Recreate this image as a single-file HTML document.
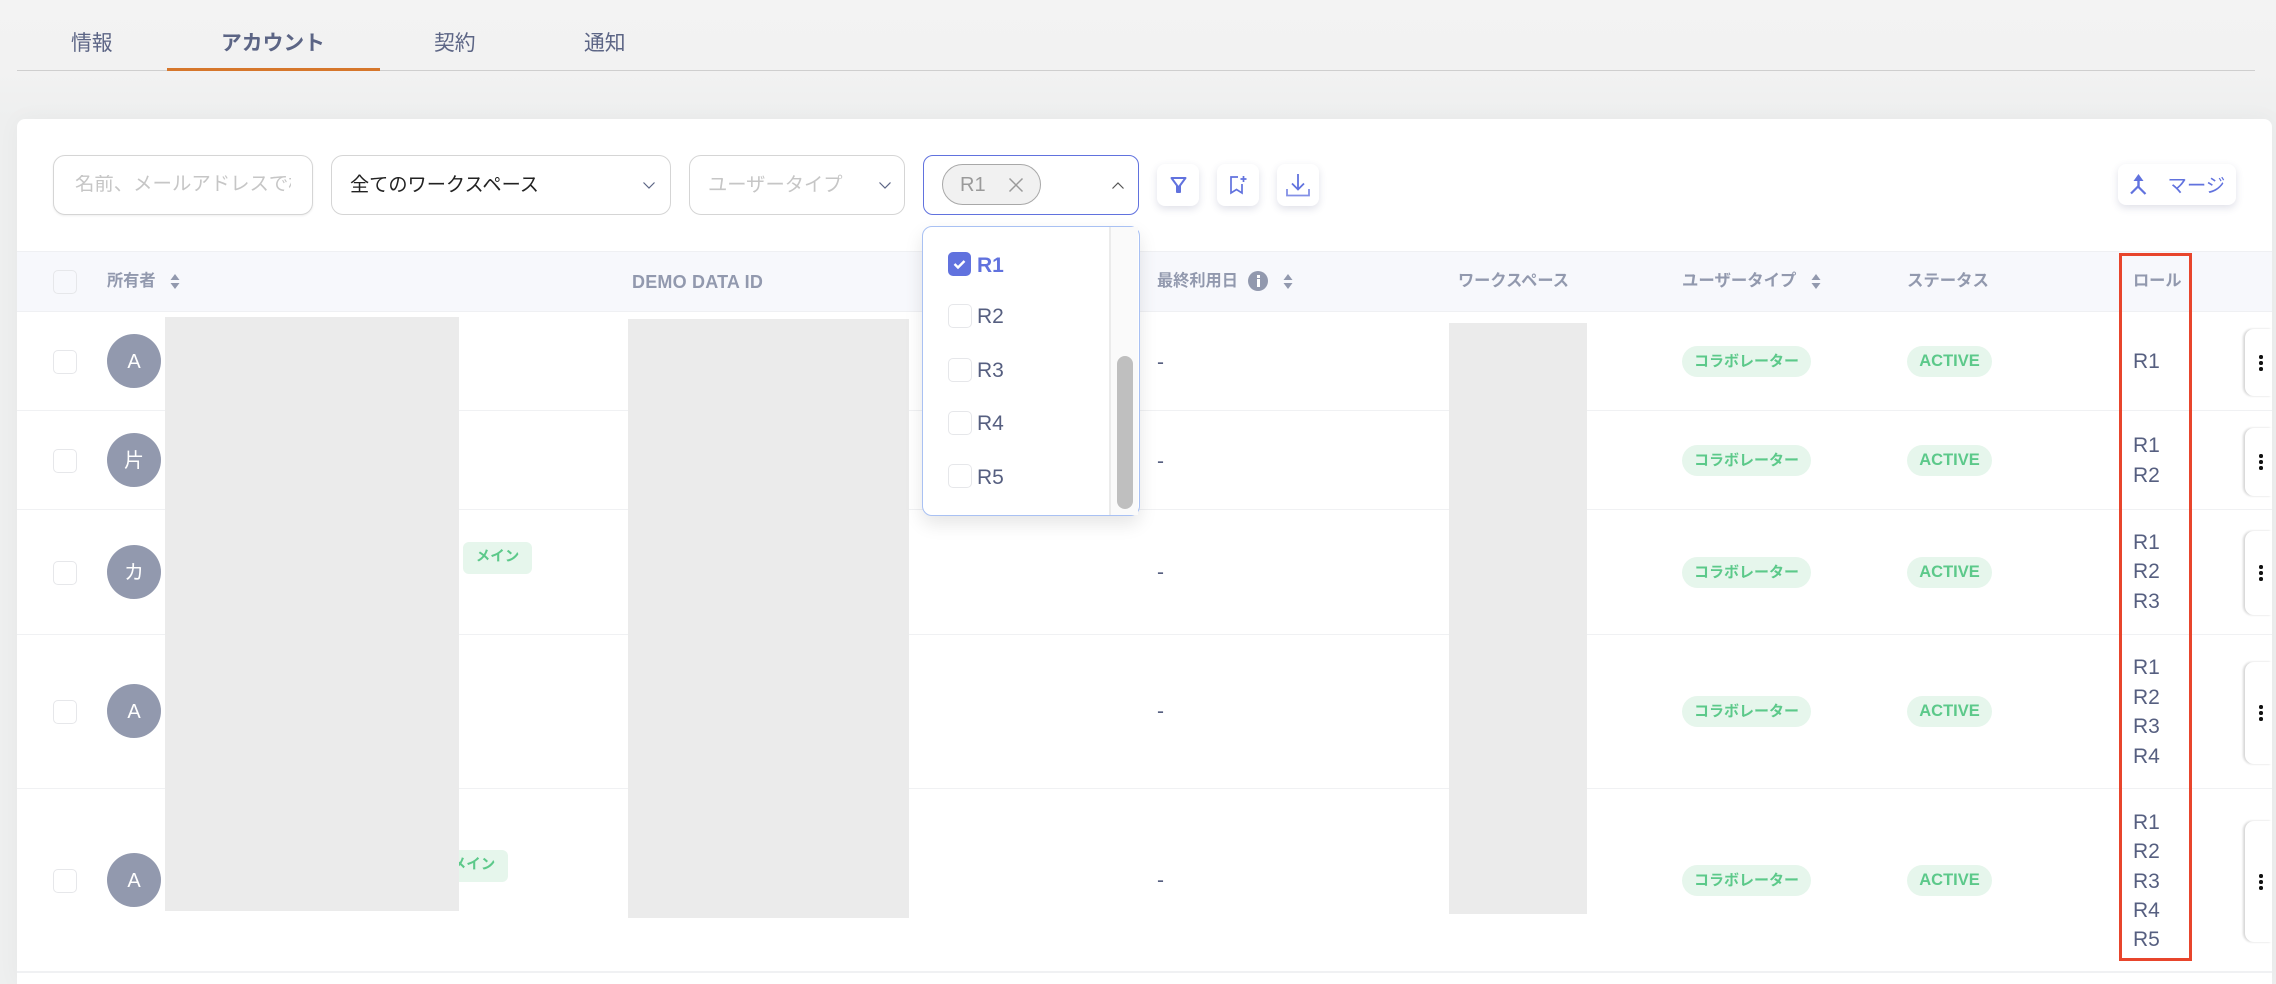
<!DOCTYPE html>
<html lang="ja"><head><meta charset="utf-8"><title>アカウント</title>
<style>
html,body{margin:0;padding:0;width:2276px;height:984px;overflow:hidden;background:#f2f2f2;font-family:"Liberation Sans","Noto Sans CJK JP",sans-serif;}
#p{position:relative;width:2276px;height:984px;overflow:hidden;background:linear-gradient(#f3f3f3 0,#f2f2f2 70px,#eeefef 119px);}
.a{position:absolute;box-sizing:border-box;}
.t{position:absolute;white-space:nowrap;line-height:1;}
.tab{font-size:20.8px;color:#5c6585;top:34px;}
.card{left:17px;top:119px;width:2255px;height:865px;background:#fff;border-radius:8px 8px 0 0;box-shadow:0 0 24px rgba(0,0,0,.035);}
.inp{border:1px solid #d5d5d5;border-radius:12px;background:#fff;top:155px;height:60px;}
.btn{background:#fff;border-radius:8px;box-shadow:0 3px 8px rgba(60,70,120,.16);}
.line{left:17px;width:2255px;height:1px;background:#f0f1f3;}
.cb{width:24px;height:24px;border:1px solid #e6e7ea;border-radius:5px;background:#fff;left:53px;}
.av{left:107px;width:54px;height:54px;border-radius:50%;background:#9299ae;color:#fff;font-size:20px;line-height:56px;text-align:center;}
.th{font-size:16.2px;font-weight:700;color:#9299ae;top:273px;}
.gb{left:1682px;width:129px;height:31px;border-radius:16px;background:#e6f6ec;color:#5cc98a;font-size:15px;font-weight:700;line-height:31px;text-align:center;}
.ab{left:1907px;width:85px;height:31px;border-radius:16px;background:#e6f6ec;color:#5cc98a;font-size:16.5px;font-weight:700;line-height:31px;text-align:center;}
.mb{width:69px;height:32px;border-radius:6px;background:#e6f6ec;color:#5cc98a;font-size:14.5px;font-weight:700;line-height:31px;text-align:center;}
.r{left:2133px;font-size:21px;color:#565f80;}
.d{left:1157px;font-size:21px;color:#565f80;}
.red{background:#ebebeb;}
.act{left:2245px;width:27px;background:#fff;border-radius:9px 0 0 9px;box-shadow:-2px 0 2px rgba(0,0,0,.16);}
.dot{position:absolute;left:2259px;width:3.5px;height:3.5px;border-radius:50%;background:#111;}
.ri{left:977px;font-size:21px;color:#565f80;}
</style></head><body><div id="p">

<div class="t tab" style="left:71px">情報</div>
<div class="t tab" style="left:221px;font-weight:700">アカウント</div>
<div class="t tab" style="left:434px">契約</div>
<div class="t tab" style="left:584px">通知</div>
<div class="a" style="left:17px;top:70px;width:2238px;height:1px;background:#cfcfcf"></div>
<div class="a" style="left:167px;top:68px;width:213px;height:3px;background:#d6772c"></div>

<div class="a card"></div>

<!-- filters -->
<div class="a inp" style="left:53px;width:260px;box-shadow:0 1px 2px rgba(0,0,0,.07)"></div>
<div class="t" style="left:75px;top:175px;width:216px;overflow:hidden;font-size:19.4px;color:#c6c6c6">名前、メールアドレスで検索</div>
<div class="a inp" style="left:331px;width:340px"></div>
<div class="t" style="left:350px;top:175.5px;font-size:19.2px;color:#222">全てのワークスペース</div>
<svg class="a" style="left:642px;top:181px" width="14" height="9" viewBox="0 0 14 9"><path d="M1.500 1.500L7 7l5.500-5.500" fill="none" stroke="#5c6585" stroke-width="1.200"/></svg>
<div class="a inp" style="left:689px;width:216px"></div>
<div class="t" style="left:708px;top:176px;font-size:19.3px;color:#c6c6c6">ユーザータイプ</div>
<svg class="a" style="left:878px;top:181px" width="14" height="9" viewBox="0 0 14 9"><path d="M1.500 1.500L7 7l5.500-5.500" fill="none" stroke="#5c6585" stroke-width="1.200"/></svg>
<div class="a" style="left:923px;top:155px;width:216px;height:60px;border:1.500px solid #6172de;border-radius:10px;background:#fff"></div>
<div class="a" style="left:942px;top:164px;width:99px;height:41px;border:1px solid #a8a8a8;border-radius:21px;background:#f1f1f1"></div>
<div class="t" style="left:960px;top:175px;font-size:20px;color:#9a9a9a">R1</div>
<svg class="a" style="left:1008px;top:177px" width="16" height="16" viewBox="0 0 16 16"><path d="M1.500 1.500l13 13M14.500 1.500l-13 13" fill="none" stroke="#9a9a9a" stroke-width="1.500"/></svg>
<svg class="a" style="left:1111px;top:181px" width="14" height="9" viewBox="0 0 14 9"><path d="M1.500 7.500L7 2l5.500 5.500" fill="none" stroke="#555" stroke-width="1.200"/></svg>

<div class="a btn" style="left:1157px;top:164px;width:42px;height:42px"></div>
<svg class="a" style="left:1170px;top:176px" width="17" height="18" viewBox="0 0 17 18"><path d="M1.500 2h14L10 9.500v6.500H7V9.500z" fill="none" stroke="#6172de" stroke-width="2" stroke-linejoin="round"/><path d="M7 9.500h3v6.500H7z" fill="#6172de"/></svg>
<div class="a btn" style="left:1217px;top:164px;width:42px;height:42px"></div>
<svg class="a" style="left:1229px;top:175px" width="18" height="20" viewBox="0 0 18 20"><path d="M9 2H2v16l5.500-3.500L13 18V9" fill="none" stroke="#6172de" stroke-width="1.700"/><path d="M14.500 1v6M11.500 4h6" fill="none" stroke="#6172de" stroke-width="1.700"/></svg>
<div class="a btn" style="left:1277px;top:164px;width:42px;height:42px"></div>
<svg class="a" style="left:1286px;top:173px" width="24" height="24" viewBox="0 0 24 24"><path d="M12 1v15M6 10.500l6 6 6-6" fill="none" stroke="#6172de" stroke-width="1.800"/><path d="M1 16v6.500h22V16" fill="none" stroke="#8390e6" stroke-width="1.800"/></svg>

<div class="a btn" style="left:2118px;top:164px;width:118px;height:41px"></div>
<svg class="a" style="left:2129px;top:173px" width="20" height="23" viewBox="0 0 20 23"><path d="M9.500 1l5 7h-10z" fill="#6172de"/><path d="M9.500 7v7" fill="none" stroke="#6172de" stroke-width="2.400"/><path d="M9.500 13L2 20.500M9.500 14l7 7" fill="none" stroke="#6172de" stroke-width="2.200"/></svg>
<div class="t" style="left:2167.5px;top:176.5px;font-size:19.4px;color:#6172de">マージ</div>

<!-- table header -->
<div class="a" style="left:17px;top:251px;width:2255px;height:61px;background:#f7f8fc;border-top:1px solid #eff0f3;border-bottom:1px solid #eff0f3"></div>
<div class="a cb" style="top:270px;background:#f7f8fc"></div>
<div class="t th" style="left:107px">所有者</div>
<svg class="a" style="left:170px;top:274px" width="10" height="15" viewBox="0 0 10 15"><path d="M5 0l4.500 6h-9zM5 15L.5 9h9z" fill="#9299ae"/></svg>
<div class="t th" style="left:632px;top:272.500px;font-size:18px;letter-spacing:.2px">DEMO DATA ID</div>
<div class="t th" style="left:1157px">最終利用日</div>
<div class="a" style="left:1248px;top:271px;width:20px;height:20px;border-radius:50%;background:#9299ae"></div>
<div class="a" style="left:1256.500px;top:275px;width:3px;height:3px;background:#fff"></div>
<div class="a" style="left:1256.500px;top:279px;width:3px;height:8px;background:#fff"></div>
<svg class="a" style="left:1283px;top:274px" width="10" height="15" viewBox="0 0 10 15"><path d="M5 0l4.500 6h-9zM5 15L.5 9h9z" fill="#9299ae"/></svg>
<div class="t th" style="left:1458px">ワークスペース</div>
<div class="t th" style="left:1682px;font-size:16.4px">ユーザータイプ</div>
<svg class="a" style="left:1811px;top:274px" width="10" height="15" viewBox="0 0 10 15"><path d="M5 0l4.500 6h-9zM5 15L.5 9h9z" fill="#9299ae"/></svg>
<div class="t th" style="left:1907px;font-size:16.4px">ステータス</div>
<div class="t th" style="left:2133px">ロール</div>

<!-- row lines -->
<div class="a line" style="top:410px"></div>
<div class="a line" style="top:509px"></div>
<div class="a line" style="top:634px"></div>
<div class="a line" style="top:788px"></div>
<div class="a" style="left:17px;top:971px;width:2255px;height:2px;background:#f0f1f3"></div>

<!-- rows left -->
<div class="a cb" style="top:350px"></div><div class="a av" style="top:334px">A</div>
<div class="a cb" style="top:449px"></div><div class="a av" style="top:433px">片</div>
<div class="a cb" style="top:561px"></div><div class="a av" style="top:545px">カ</div>
<div class="a cb" style="top:700px"></div><div class="a av" style="top:684px">A</div>
<div class="a cb" style="top:869px"></div><div class="a av" style="top:853px">A</div>

<div class="a mb" style="left:463px;top:542px">メイン</div>
<div class="a mb" style="left:439px;top:850px">メイン</div>

<!-- redactions -->
<div class="a red" style="left:164.500px;top:317px;width:294px;height:594px"></div>
<div class="a red" style="left:628px;top:319px;width:281px;height:599px"></div>
<div class="a red" style="left:1449px;top:323px;width:138px;height:591px"></div>

<!-- dashes -->
<div class="t d" style="top:351.500px">-</div>
<div class="t d" style="top:450.500px">-</div>
<div class="t d" style="top:562px">-</div>
<div class="t d" style="top:701px">-</div>
<div class="t d" style="top:870px">-</div>

<!-- badges -->
<div class="a gb" style="top:346px">コラボレーター</div><div class="a ab" style="top:346px">ACTIVE</div>
<div class="a gb" style="top:445px">コラボレーター</div><div class="a ab" style="top:445px">ACTIVE</div>
<div class="a gb" style="top:557px">コラボレーター</div><div class="a ab" style="top:557px">ACTIVE</div>
<div class="a gb" style="top:696px">コラボレーター</div><div class="a ab" style="top:696px">ACTIVE</div>
<div class="a gb" style="top:865px">コラボレーター</div><div class="a ab" style="top:865px">ACTIVE</div>

<!-- roles -->
<div class="t r" style="top:351px">R1</div>
<div class="t r" style="top:435px">R1</div><div class="t r" style="top:465px">R2</div>
<div class="t r" style="top:532px">R1</div><div class="t r" style="top:561px">R2</div><div class="t r" style="top:591px">R3</div>
<div class="t r" style="top:657px">R1</div><div class="t r" style="top:687px">R2</div><div class="t r" style="top:716px">R3</div><div class="t r" style="top:746px">R4</div>
<div class="t r" style="top:812px">R1</div><div class="t r" style="top:841px">R2</div><div class="t r" style="top:871px">R3</div><div class="t r" style="top:900px">R4</div><div class="t r" style="top:929px">R5</div>

<!-- red box -->
<div class="a" style="left:2119px;top:253px;width:73px;height:708px;border:3px solid #e8452c"></div>

<!-- action buttons -->
<div class="a act" style="top:329px;height:67px"></div>
<div class="a act" style="top:428px;height:68px"></div>
<div class="a act" style="top:531px;height:84px"></div>
<div class="a act" style="top:662px;height:102px"></div>
<div class="a act" style="top:821px;height:121px"></div>
<div class="dot" style="top:355px"></div><div class="dot" style="top:361px"></div><div class="dot" style="top:367px"></div>
<div class="dot" style="top:454px"></div><div class="dot" style="top:460px"></div><div class="dot" style="top:466px"></div>
<div class="dot" style="top:565px"></div><div class="dot" style="top:571px"></div><div class="dot" style="top:577px"></div>
<div class="dot" style="top:705px"></div><div class="dot" style="top:711px"></div><div class="dot" style="top:717px"></div>
<div class="dot" style="top:874px"></div><div class="dot" style="top:880px"></div><div class="dot" style="top:886px"></div>

<!-- dropdown -->
<div class="a" style="left:922px;top:226px;width:218px;height:290px;background:#fff;border:1.500px solid #a9c1f3;border-radius:10px;box-shadow:0 8px 18px rgba(0,0,0,.1)"></div>
<div class="a" style="left:1109px;top:227px;width:29px;height:288px;background:#fafafa;border-left:2px solid #ebebeb"></div>
<div class="a" style="left:1117px;top:356px;width:16px;height:153px;border-radius:8px;background:#bfbfbf"></div>
<div class="a" style="left:948px;top:252px;width:23px;height:24px;border-radius:5px;background:#6172de"></div>
<svg class="a" style="left:952px;top:257px" width="15" height="14" viewBox="0 0 15 14"><path d="M2.500 7l3.500 3.500L12.500 4" fill="none" stroke="#fff" stroke-width="2.400"/></svg>
<div class="t ri" style="top:254.500px;color:#6172de;font-weight:700">R1</div>
<div class="a cb" style="left:948px;top:304px"></div><div class="t ri" style="top:306px">R2</div>
<div class="a cb" style="left:948px;top:358px"></div><div class="t ri" style="top:360px">R3</div>
<div class="a cb" style="left:948px;top:411px"></div><div class="t ri" style="top:413px">R4</div>
<div class="a cb" style="left:948px;top:464px"></div><div class="t ri" style="top:467px">R5</div>

</div></body></html>
